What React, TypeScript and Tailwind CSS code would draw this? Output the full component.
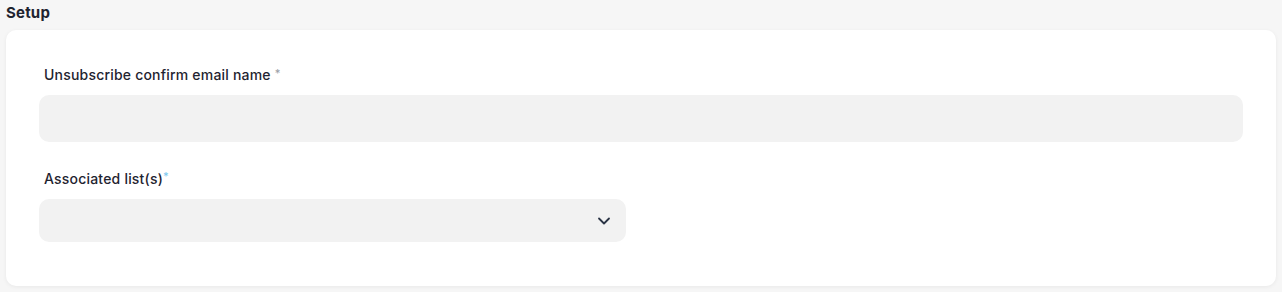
import { ChevronDown } from "lucide-react"

export default function App() {
  return (
    <div className="min-h-[292px] w-full bg-[#f6f6f6] px-[6px] pt-[4px] pb-[6px] font-['Inter',sans-serif] text-[#1f2430]">
      <h2 className="text-[15px] font-bold leading-[18px] tracking-[0.2px]">Setup</h2>

      <div className="mt-[8px] rounded-[10px] bg-white px-[33px] pt-[35px] pb-[44px] shadow-[0_1px_4px_rgba(0,0,0,0.06)]">
        {/* email name */}
        <div>
          <label className="block pl-[5px] text-[14px] font-medium leading-[20px] tracking-[0.2px]">
            Unsubscribe confirm email name{" "}
            <span className="relative -top-[3px] text-[11px] text-[#9aa0a6]">*</span>
          </label>
          <input
            type="text"
            className="mt-[9px] block h-[47px] w-full rounded-[10px] bg-[#f2f2f2] px-3 text-[13px] outline-none"
          />
        </div>

        {/* associated lists */}
        <div className="mt-[27px]">
          <label className="block pl-[5px] text-[14px] font-medium leading-[20px] tracking-[0.2px]">
            Associated list(s)
            <span className="relative -top-[4px] text-[11px] text-[#7cc8ee]">*</span>
          </label>
          <button
            type="button"
            className="mt-[9px] flex h-[43px] w-[587px] items-center justify-end rounded-[10px] bg-[#f2f2f2] pr-[12px]"
          >
            <ChevronDown className="h-[20px] w-[20px] text-[#2b3445]" strokeWidth={2.2} />
          </button>
        </div>
      </div>
    </div>
  )
}
